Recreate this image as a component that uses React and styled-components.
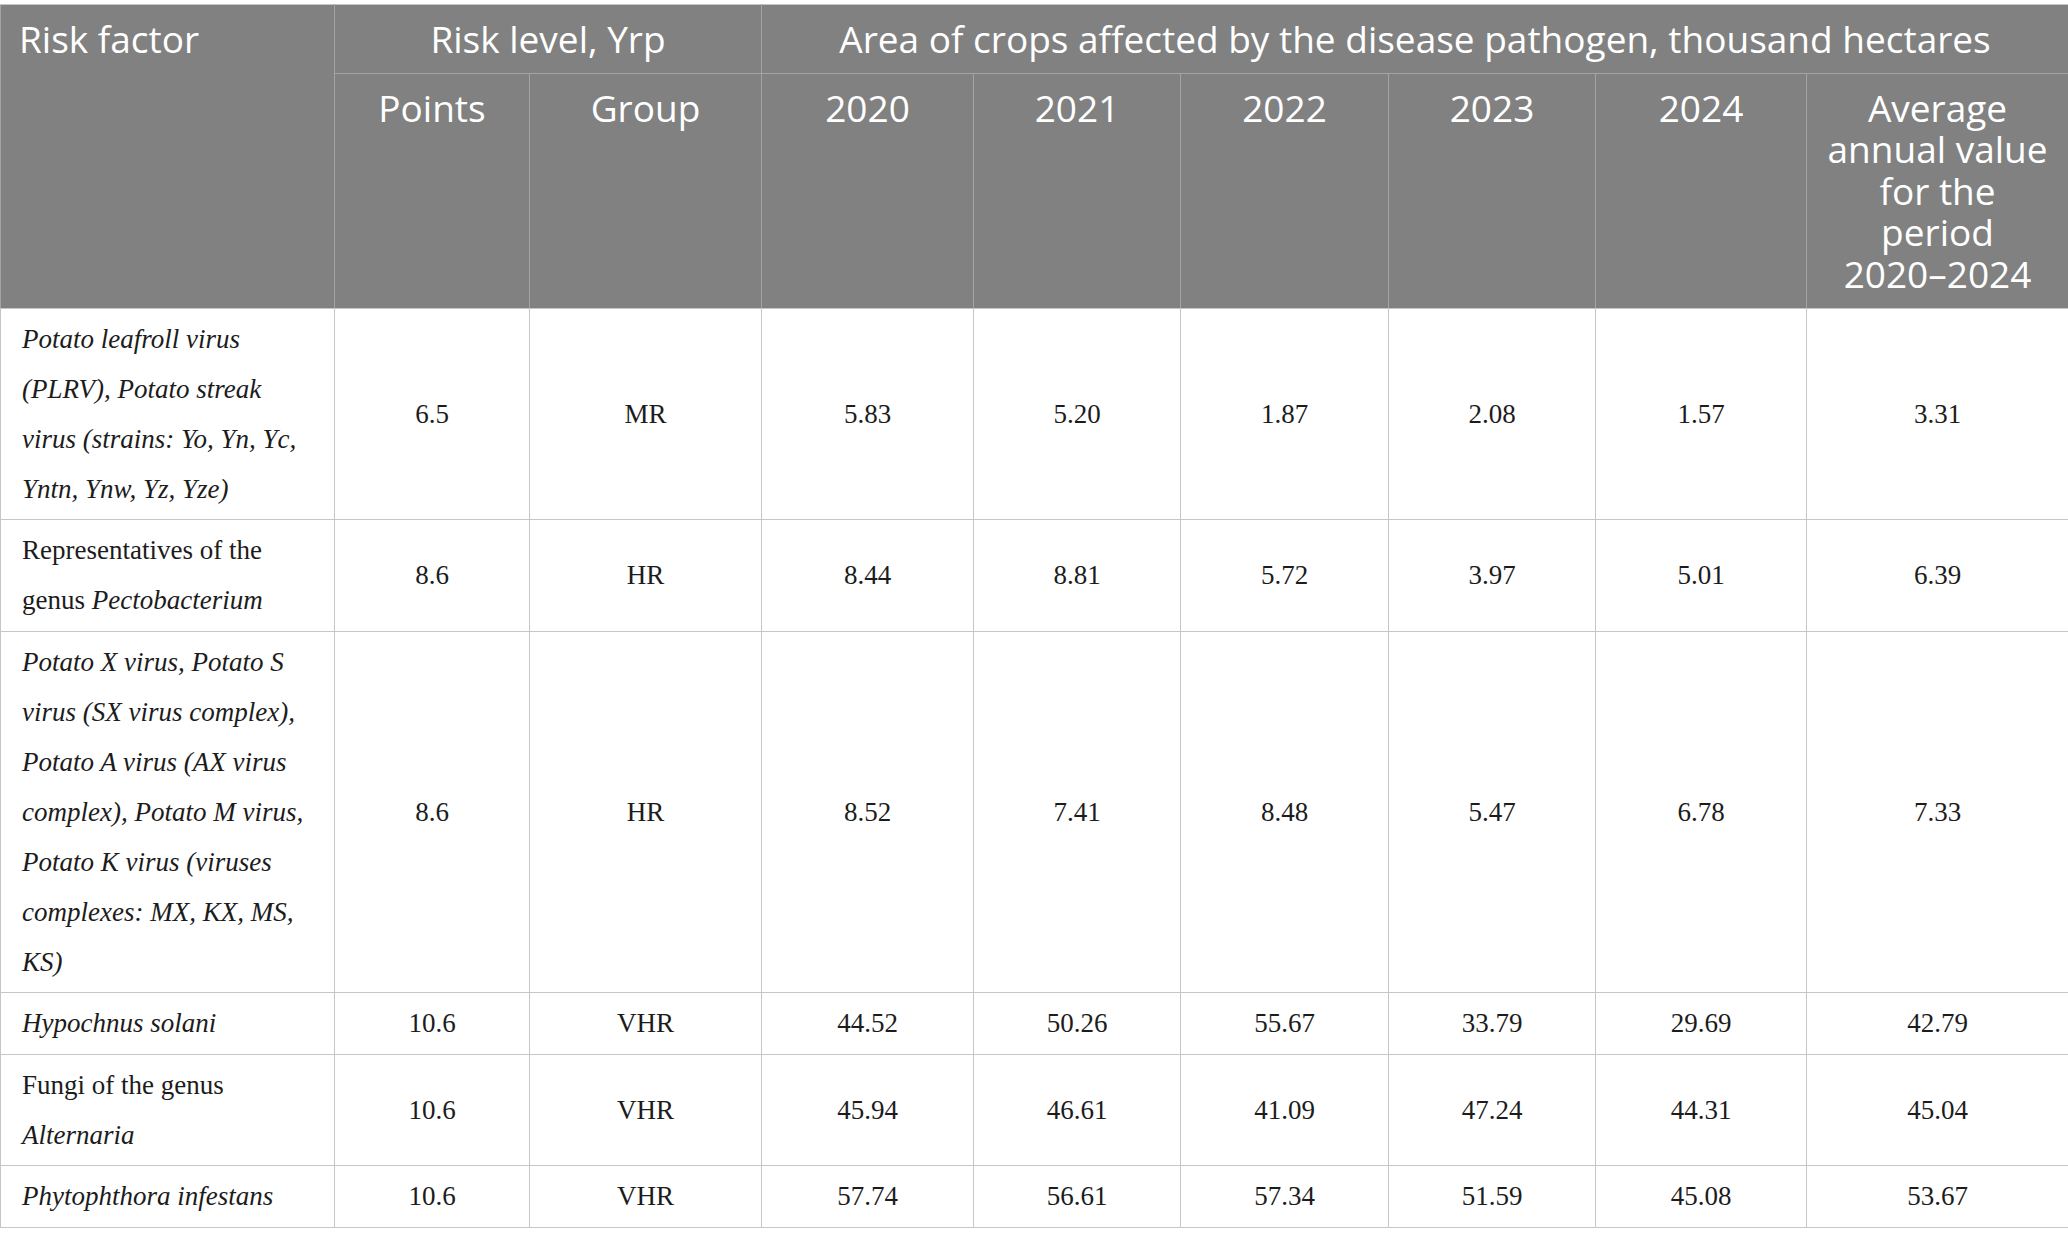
import React from "react";
import styled, { createGlobalStyle } from "styled-components";

const GlobalStyle = createGlobalStyle`
  html, body {
    margin: 0;
    padding: 0;
    background: #ffffff;
  }
`;

const Page = styled.div`
  padding-top: 4px;
  width: 2068px;
`;

const Table = styled.table`
  width: 2068px;
  border-collapse: collapse;
  table-layout: fixed;
  border: 1px solid #c6c6c6;
`;

const HeadCell = styled.th`
  background: #808180;
  color: #ffffff;
  font-family: "Open Sans", "Noto Sans", sans-serif;
  font-weight: 400;
  font-size: 37px;
  line-height: 41.6px;
  text-align: ${(p) => (p.$left ? "left" : "center")};
  vertical-align: top;
  padding: 13px 18px 13px;
  border: 1px solid #a3a4a3;
  border-bottom-color: ${(p) => (p.$last ? "#c6c6c6" : "#a3a4a3")};
  border-top-color: #c6c6c6;
`;

const NoWrap = styled.span`
  white-space: nowrap;
`;

const Cell = styled.td`
  font-family: "Liberation Serif", "Times New Roman", serif;
  font-size: 27px;
  line-height: 50px;
  color: #1c1c1c;
  text-align: ${(p) => (p.$left ? "left" : "center")};
  vertical-align: middle;
  padding: 5px 21px 5.5px;
  border: 1px solid #c6c6c6;
`;

const Sci = styled.i`
  font-style: italic;
`;

const widths = [334, 195, 232, 212, 207, 208, 207, 211, 262];

const rows = [
  {
    name: (
      <Sci>
        Potato leafroll virus (PLRV), Potato streak virus (strains: Yo, Yn, Yc,
        Yntn, Ynw, Yz, Yze)
      </Sci>
    ),
    points: "6.5",
    group: "MR",
    values: ["5.83", "5.20", "1.87", "2.08", "1.57", "3.31"],
  },
  {
    name: (
      <>
        Representatives of the genus <Sci>Pectobacterium</Sci>
      </>
    ),
    points: "8.6",
    group: "HR",
    values: ["8.44", "8.81", "5.72", "3.97", "5.01", "6.39"],
  },
  {
    name: (
      <Sci>
        Potato X virus, Potato S virus (SX virus complex), Potato A virus (AX
        virus complex), Potato M virus, Potato K virus (viruses complexes: MX,
        KX, MS, KS)
      </Sci>
    ),
    points: "8.6",
    group: "HR",
    values: ["8.52", "7.41", "8.48", "5.47", "6.78", "7.33"],
  },
  {
    name: <Sci>Hypochnus solani</Sci>,
    points: "10.6",
    group: "VHR",
    values: ["44.52", "50.26", "55.67", "33.79", "29.69", "42.79"],
  },
  {
    name: (
      <>
        Fungi of the genus <Sci>Alternaria</Sci>
      </>
    ),
    points: "10.6",
    group: "VHR",
    values: ["45.94", "46.61", "41.09", "47.24", "44.31", "45.04"],
  },
  {
    name: <Sci>Phytophthora infestans</Sci>,
    points: "10.6",
    group: "VHR",
    values: ["57.74", "56.61", "57.34", "51.59", "45.08", "53.67"],
  },
];

const years = ["2020", "2021", "2022", "2023", "2024"];

export default function App() {
  return (
    <>
      <GlobalStyle />
      <Page>
        <Table>
          <colgroup>
            {widths.map((w, i) => (
              <col key={i} style={{ width: `${w}px` }} />
            ))}
          </colgroup>
          <thead>
            <tr>
              <HeadCell rowSpan={2} $left $last>
                Risk factor
              </HeadCell>
              <HeadCell colSpan={2}>Risk level, Yrp</HeadCell>
              <HeadCell colSpan={6}>
                Area of crops affected by the disease pathogen, thousand
                hectares
              </HeadCell>
            </tr>
            <tr>
              <HeadCell $last>Points</HeadCell>
              <HeadCell $last>Group</HeadCell>
              {years.map((y) => (
                <HeadCell key={y} $last>
                  {y}
                </HeadCell>
              ))}
              <HeadCell $last>
                Average annual value for the period <NoWrap>2020–2024</NoWrap>
              </HeadCell>
            </tr>
          </thead>
          <tbody>
            {rows.map((r, i) => (
              <tr key={i}>
                <Cell $left>{r.name}</Cell>
                <Cell>{r.points}</Cell>
                <Cell>{r.group}</Cell>
                {r.values.map((v, j) => (
                  <Cell key={j}>{v}</Cell>
                ))}
              </tr>
            ))}
          </tbody>
        </Table>
      </Page>
    </>
  );
}
